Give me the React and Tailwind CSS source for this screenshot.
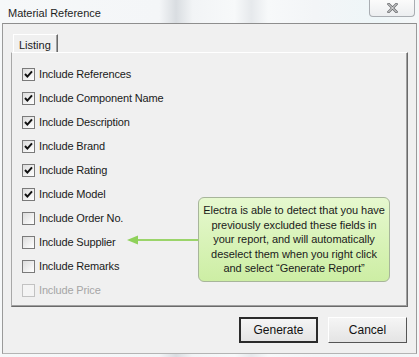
import React from 'react';

const rows = [
  { label: 'Include References', checked: true },
  { label: 'Include Component Name', checked: true },
  { label: 'Include Description', checked: true },
  { label: 'Include Brand', checked: true },
  { label: 'Include Rating', checked: true },
  { label: 'Include Model', checked: true },
  { label: 'Include Order No.', checked: false },
  { label: 'Include Supplier', checked: false },
  { label: 'Include Remarks', checked: false },
  { label: 'Include Price', checked: false, disabled: true },
];

const CheckRow = ({ label, checked, disabled }) => (
  <div className="h-[24px] flex items-center gap-[4px]">
    <div
      className={`w-[13px] h-[13px] border flex items-center justify-center ${
        disabled
          ? 'border-[#c2c2c2] bg-[#f4f4f4]'
          : 'border-[#7a7a7a] bg-[linear-gradient(135deg,#dcdcdc,#ffffff)]'
      }`}
    >
      {checked && (
        <svg width="9" height="9" viewBox="0 0 9 9">
          <path d="M1 4 L3.4 6.6 L8 1.4" fill="none" stroke="#111" strokeWidth="2" />
        </svg>
      )}
    </div>
    <span
      className={`text-[11px] tracking-[-0.15px] ${disabled ? 'text-[#a6a6a6]' : 'text-[#1a1a1a]'}`}
    >
      {label}
    </span>
  </div>
);

const WinButton = ({ children, primary }) => (
  <button
    className={`w-[79px] h-[26px] text-[12px] text-[#111] bg-[linear-gradient(#f5f5f5,#e4e4e4)] ${
      primary
        ? 'border-2 border-[#2b2b2b]'
        : 'border border-t-white border-l-white border-r-[#555] border-b-[#555]'
    }`}
  >
    {children}
  </button>
);

export default function App() {
  return (
    <div
      className="w-[419px] h-[357px] flex flex-col overflow-hidden bg-[linear-gradient(90deg,#f6f8f9_0%,#f4f6f8_38%,#d9dde1_42%,#f2f4f6_46%,#f7f9fa_56%,#e6e9ec_60%,#f7f9fa_64%,#f3f5f7_75%,#eef6f8_90%,#f5f7f8_100%)]"
      style={{ fontFamily: '"Liberation Sans", Arial, sans-serif' }}
    >
      {/* Title bar */}
      <div className="h-[23px] shrink-0 flex items-start justify-between pl-[8px] pr-[4px]">
        <span className="pt-[5px] text-[11px] text-[#1e1e1e]">Material Reference</span>
        <div className="w-[46px] h-[17px] border border-t-0 border-[#a9adb2] rounded-b-[4px] bg-[linear-gradient(#fbfbfb,#eceef0)] flex items-center justify-center">
          <svg width="11" height="10" viewBox="0 0 11 10">
            <path
              d="M1.5 1 L9.5 9 M9.5 1 L1.5 9"
              stroke="#6d6f72"
              strokeWidth="2.6"
              strokeLinecap="square"
            />
            <path
              d="M1.5 1 L9.5 9 M9.5 1 L1.5 9"
              stroke="#f4f4f4"
              strokeWidth="1"
              strokeLinecap="square"
            />
          </svg>
        </div>
      </div>

      {/* Window body */}
      <div className="mx-[2px] mb-[3px] flex-1 flex flex-col bg-[#f0f0f0] border-t border-t-[#8e8e8e] border-x border-x-[#9a9a9a] border-b border-b-[#b4b4b4] px-[8px] pt-[10px]">
        {/* Tab header */}
        <div className="flex pl-[2px]">
          <div className="h-[18px] w-[45px] border border-b-0 border-t-white border-l-white border-r-[#696969] pl-[5px] pt-[2px] text-[11px] text-[#1a1a1a] shadow-[inset_-1px_0_0_#a0a0a0]">
            Listing
          </div>
        </div>

        {/* Tab panel */}
        <div className="relative h-[255px] border border-t-white border-l-[#a8a8a8] border-r-[#6a6a6a] border-b-[#6a6a6a] shadow-[inset_-1px_-1px_0_#a0a0a0] pl-[10px] pt-[9px]">
          {rows.map((r) => (
            <CheckRow key={r.label} {...r} />
          ))}

          {/* Annotation arrow */}
          <svg className="absolute left-[115px] top-[181px]" width="74" height="12" viewBox="0 0 74 12">
            <line x1="8" y1="6" x2="74" y2="6" stroke="#9bd46a" strokeWidth="2" />
            <path d="M0 6 L11 1.5 L11 10.5 Z" fill="#8fd15a" />
          </svg>

          {/* Annotation callout */}
          <div className="absolute left-[186px] top-[144px] w-[192px] h-[85px] rounded-[6px] border border-[#a7b59a] bg-[linear-gradient(#e6f8cf,#cdeea4)] flex items-center justify-center text-center text-[11px] tracking-[-0.05px] leading-[14.5px] text-[#1a1a1a]">
            <p>
              Electra is able to detect that you have
              <br />
              previously excluded these fields in
              <br />
              your report, and will automatically
              <br />
              deselect them when you right click
              <br />
              and select “Generate Report”
            </p>
          </div>
        </div>

        {/* Buttons */}
        <div className="flex justify-end gap-[10px] pt-[10px] pr-[1px]">
          <WinButton primary>Generate</WinButton>
          <WinButton>Cancel</WinButton>
        </div>
      </div>
    </div>
  );
}
